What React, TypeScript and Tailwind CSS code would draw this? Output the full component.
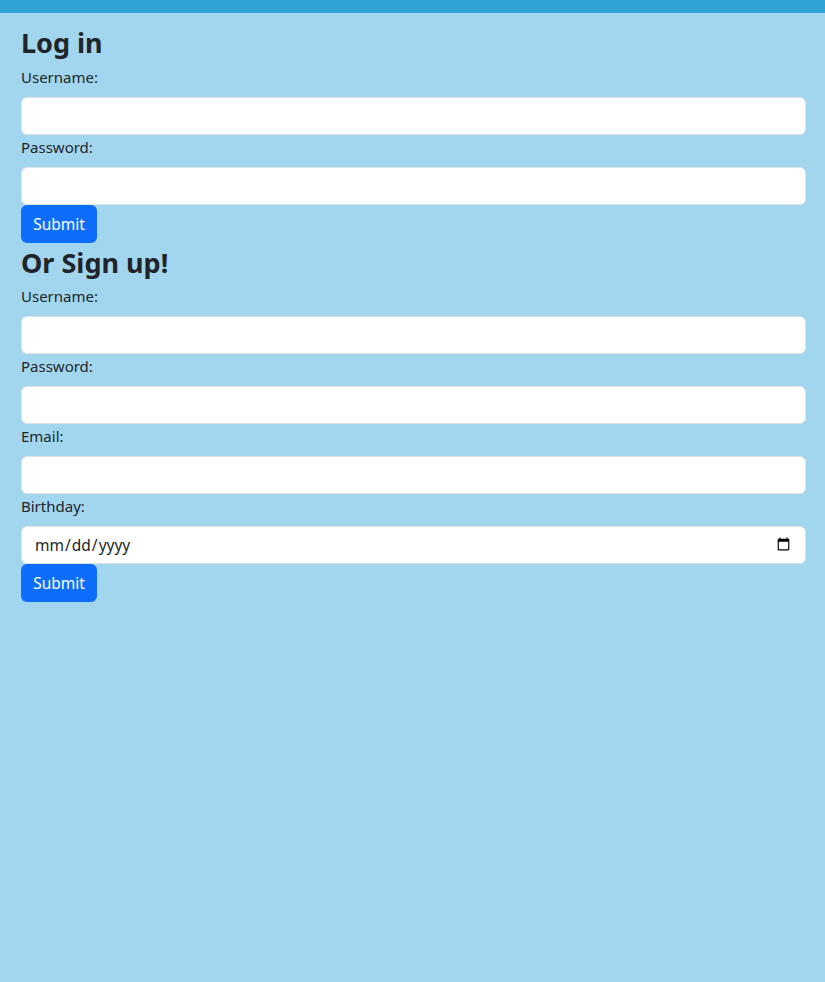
import React from "react";

const font = { fontFamily: '"Noto Sans", "Open Sans", sans-serif' };

function Field({ label, type = "text" }: { label: string; type?: string }) {
  return (
    <div className="flex flex-col">
      <label className="mb-2 text-[15px] leading-6 text-[#212529]">{label}</label>
      <input
        type={type}
        className="h-[38px] w-full rounded-[6px] border border-[#dee2e6] bg-white px-3 py-[6px] text-[15.5px] leading-6 text-[#212529] outline-none"
      />
    </div>
  );
}

function SubmitButton() {
  return (
    <div>
      <button className="h-[38px] w-[76px] rounded-[6px] bg-[#0d6efd] px-3 text-[15.5px] leading-6 text-white">
        Submit
      </button>
    </div>
  );
}

export default function App() {
  return (
    <div className="min-h-[982px] w-full bg-[#a1d6ee]" style={font}>
      <div className="h-[13px] w-full bg-[#2fa1d4]" />
      <div className="flex flex-col pl-[21px] pr-[19px] pt-[10px]">
        <h3 className="mb-[6px] pt-[3px] text-[27px] font-bold leading-[33px] text-[#212529]">Log in</h3>
        <Field label="Username:" />
        <Field label="Password:" type="password" />
        <SubmitButton />
        <h3 className="mb-[5px] pt-[3px] text-[27px] font-bold leading-[33px] text-[#212529]">Or Sign up!</h3>
        <Field label="Username:" />
        <Field label="Password:" type="password" />
        <Field label="Email:" type="email" />
        <Field label="Birthday:" type="date" />
        <SubmitButton />
      </div>
    </div>
  );
}
